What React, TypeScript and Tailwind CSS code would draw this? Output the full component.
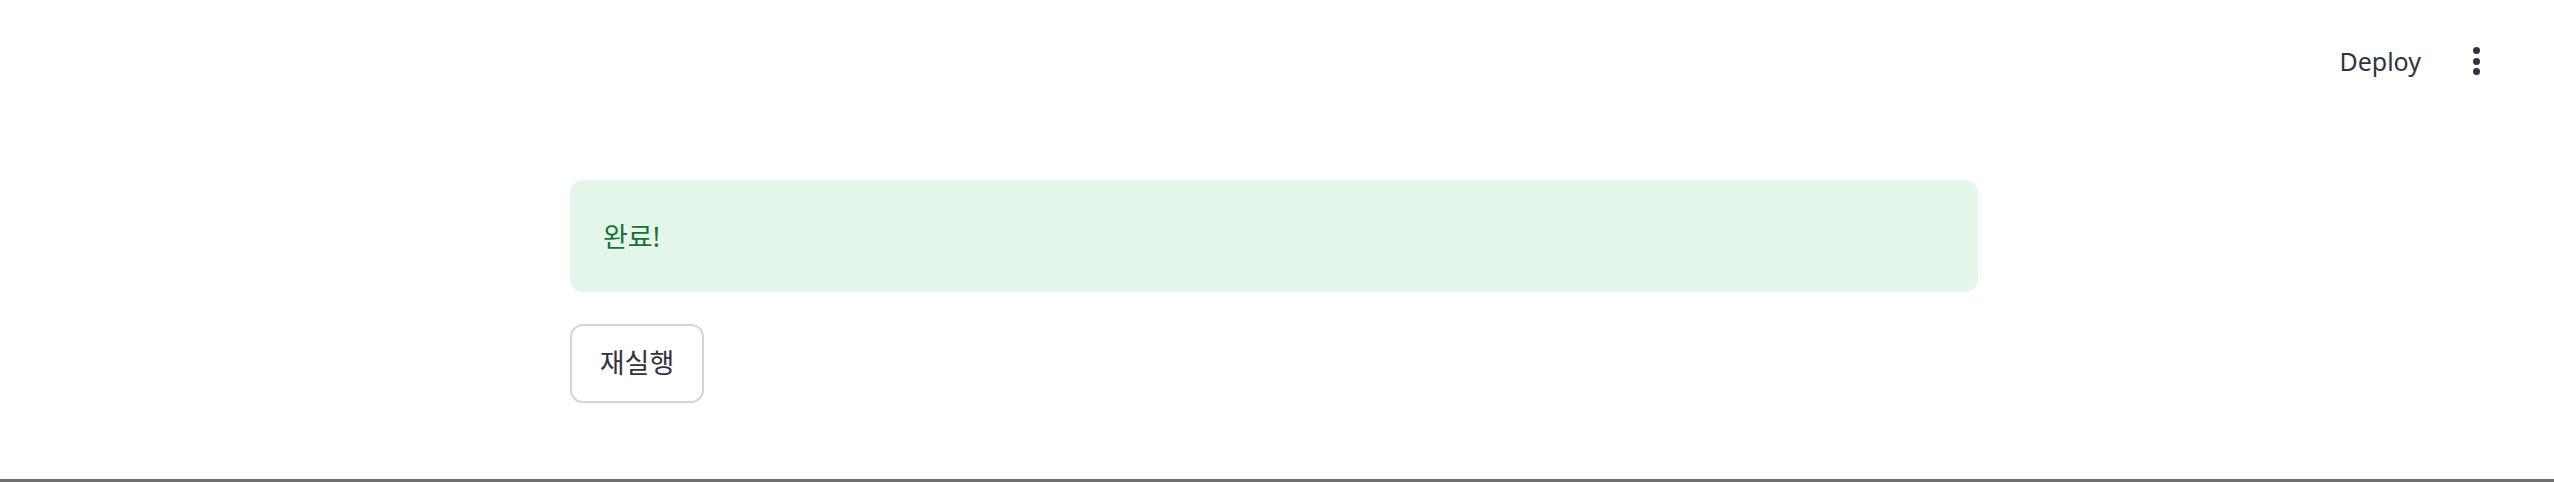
import React from 'react';

const font = { fontFamily: '"Noto Sans", "Noto Sans CJK KR", sans-serif' };

export default function App() {
  return (
    <div className="flex h-[482px] w-full flex-col border-b-[3px] border-[#6e6e6e] bg-white" style={font}>
      <header className="flex h-[122px] items-center justify-end pr-[72px]">
        <button className="text-[25px] leading-none text-[#31333f]">Deploy</button>
        <button className="ml-[50px] flex flex-col items-center gap-[3.5px] px-[2px]">
          <span className="h-[7px] w-[7px] rounded-full bg-[#31333f]" />
          <span className="h-[7px] w-[7px] rounded-full bg-[#31333f]" />
          <span className="h-[7px] w-[7px] rounded-full bg-[#31333f]" />
        </button>
      </header>

      <main className="ml-[570px] mt-[58px] flex w-[1408px] flex-col gap-[32px]">
        <div className="flex h-[112px] items-center rounded-[13px] bg-[#e4f6ea] pl-[33px]">
          <p className="text-[27px] leading-none text-[#177233]">완료!</p>
        </div>
        <div>
          <button className="flex h-[79px] w-[134px] items-center justify-center rounded-[13px] border-2 border-[#d3d3d8] bg-white text-[27px] text-[#31333f]">
            재실행
          </button>
        </div>
      </main>
    </div>
  );
}
